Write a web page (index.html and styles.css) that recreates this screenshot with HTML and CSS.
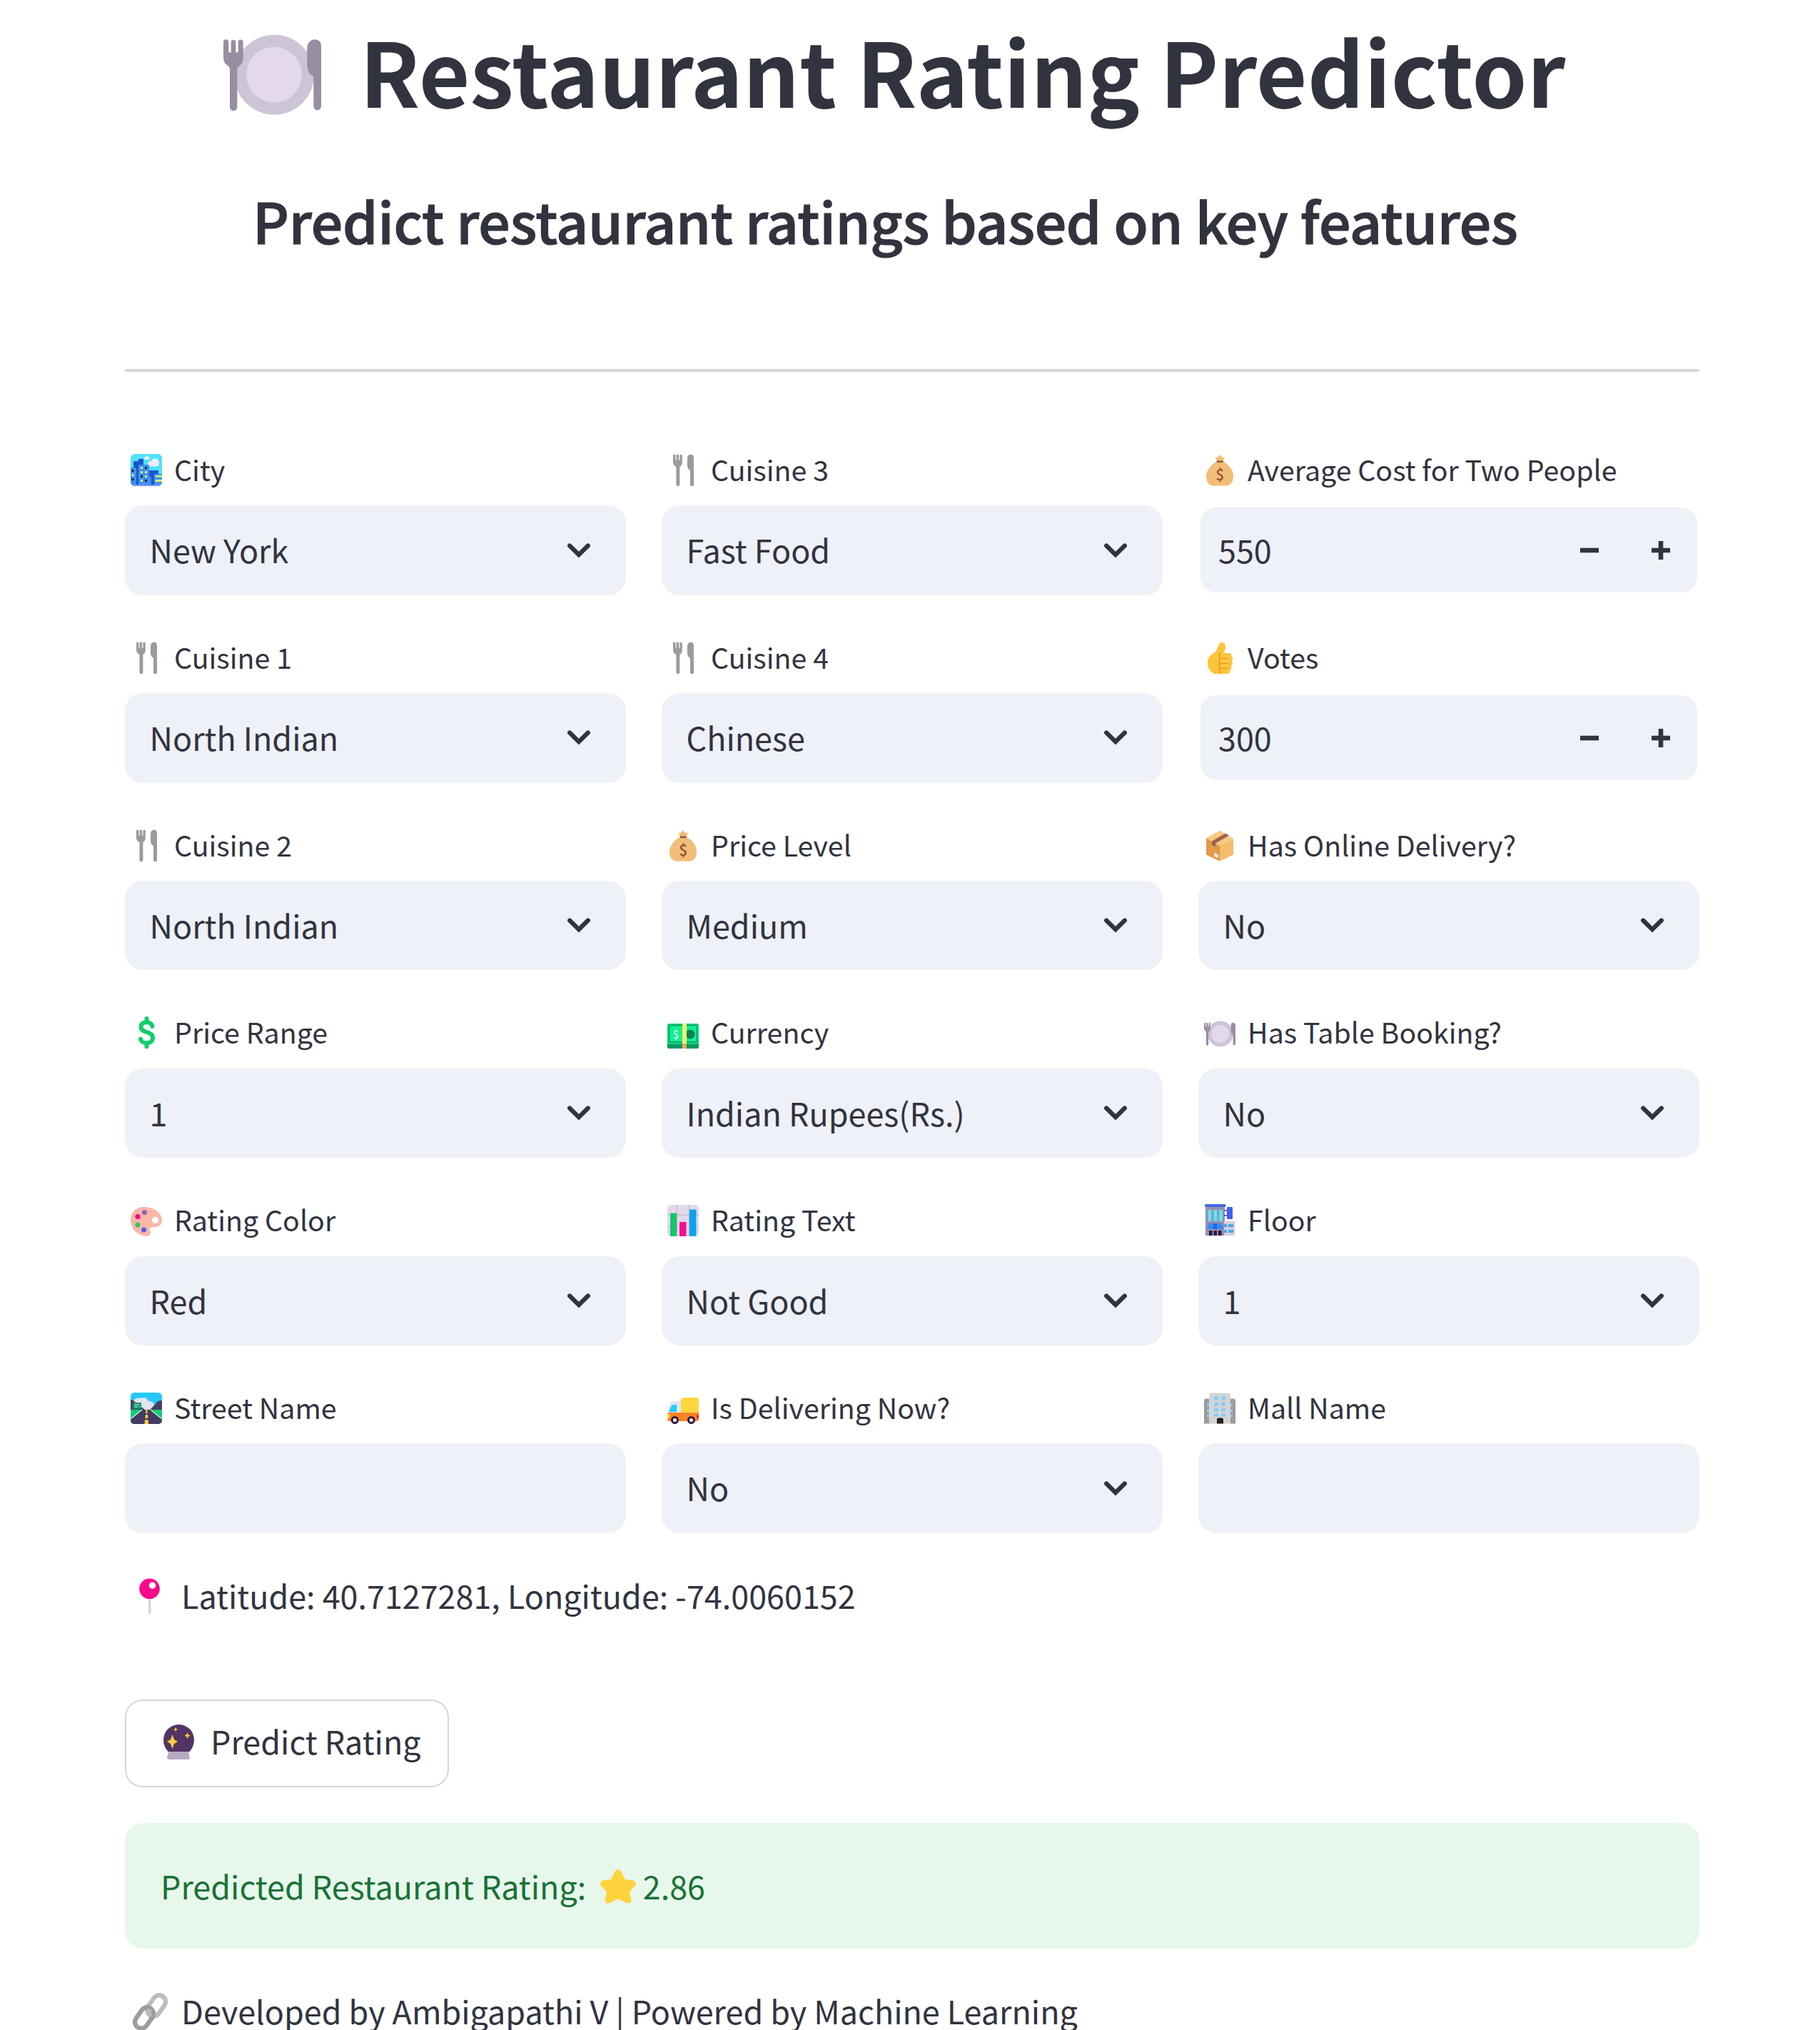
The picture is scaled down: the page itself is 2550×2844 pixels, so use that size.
FILE: index.html
```
<!DOCTYPE html>
<html lang="en">
<head>
<meta charset="utf-8">
<title>Restaurant Rating Predictor</title>
<link rel="stylesheet" href="styles.css">
</head>
<body>
<svg class="sprite" aria-hidden="true">
  <symbol id="plate" viewBox="69 31 411 411">
    <circle cx="283" cy="255" r="168" fill="#cdc4d6"/><circle cx="282" cy="255" r="117" fill="#e3d8ed"/>
    <path d="M69 118a11 11 0 0 1 22 0v39q0 5 5 5t5-5v-39a10 10 0 0 1 20 0v39q0 5 5 5t5-5v-39a10 10 0 0 1 21 0v70q0 20-17 31-8 6-8 14v158a15 15 0 0 1-31 0V235q0-10-7-17-20-10-20-36zM421 141a34 34 0 0 1 35-34q24 3 24 28v253a16 16 0 0 1-32 0V262q-27-12-27-45z" fill="#998da2"/>
  </symbol>
  <symbol id="fork" viewBox="0 0 44 44">
    <path d="M8 1.500a1.800 1.800 0 0 1 3.500 0v7h1.200v-7a1.800 1.800 0 0 1 3.500 0v7h1.200v-7a1.800 1.800 0 0 1 3.400 0v10q0 4-3.400 6v24.500a2.500 2.500 0 0 1-5 0V17.500Q8 15.500 8 11zM28 6q0-5.500 5-6 4 .5 4 4.500v38a2.500 2.500 0 0 1-5 0V22.500q-4-2-4-7z" fill="#9b9b9b"/>
  </symbol>
  <symbol id="city" viewBox="0 0 44 45">
    <clipPath id="cityClip"><rect width="44" height="45" rx="6"/></clipPath>
    <g clip-path="url(#cityClip)">
      <rect width="44" height="45" fill="#50e2ff"/>
      <path d="M18.500 6q0-2 2.500-2 3-2 5 0 1 3-1 4h-5zM24 14q1-4 5-4 2-5 8-3 5 4 2 9-3 3-8 1-6 1-7-3z" fill="#f1ecfa"/>
      <path d="M4 11q0-1 1-1h6V8q0-1 1-1h5q1 0 1 1v37H4zM26 23h13v22H26z" fill="#1756cd"/>
      <path d="M0 19h6q2 0 2 2v24H0zM11 16q0-1 1-1h14v17h3v13H11zM33 28h11v17H33z" fill="#4190ec"/>
      <path d="M14 18h3v3h-3zM20 24h3v3h-3zM14 24h3v3h-3zM20 30h3v3h-3zM14 36h3v3h-3zM1.500 28h3v3h-3zM34.500 30H44v2.500h-9.500zM34.500 36H44v3h-9.500z" fill="#d7ec7c"/>
      <path d="M20 18h3v3h-3zM14 30h3v3h-3zM20 36h3v3h-3zM1.500 22h3v3h-3zM1.500 34h3v3h-3z" fill="#122360"/>
      <path d="M0 43h44v2H0z" fill="#7794ee"/>
    </g>
  </symbol>
  <symbol id="bag" viewBox="0 0 44 44">
    <path d="M18 10l-2.500-6 3 .5L22 .5l3.500 4 3.500-.7L26.500 10C34 14 41 21 41 30.500S37 43 32 44H12C6 43 3 38 3 30.500S10 14 18 10z" fill="#f2bd78"/>
    <path d="M18.500 9h7.500q1 0 1 1.200t-1 1.300h-7.500q-1 0-1-1.300T18.500 9z" fill="#8d5845"/>
  </symbol>
  <symbol id="thumb" viewBox="0 0 44 44">
    <path d="M20 5q1-4 5-4.500 6 1 5 9l-3 6h8q4 0 3.500 4 3 3 .5 7 2 4-1 7 1 3-1 5 0 5-4 6.500H17Q5 43 5 28q0-7 6-11 6-2 9-12z" fill="#fcc53c"/>
    <path d="M23 15q-3 5-1 8-2 4 0 7-2 4 0 7-1 4 2 7M22 23h12M22 30h12M22 37h11" fill="none" stroke="#dc8c22" stroke-width="1.200"/>
  </symbol>
  <symbol id="package" viewBox="0 0 44 44">
    <path d="M3 11.500L22 22v22L3 35z" fill="#e19a48"/><path d="M22 22l19-9.500V35L22 44z" fill="#f4bc6d"/>
    <path d="M3 11.500L22.500 1 41 12.500 22 22z" fill="#fbc982"/>
    <path d="M11 16L30 5l5 3-19 11v5l-5-3z" fill="#9d6252"/><path d="M14 32l6 3v5l-6-3z" fill="#e8e1e8"/>
  </symbol>
  <symbol id="dollar" viewBox="0 0 44 45">
    <path d="M30.500 14C29.500 6.500 14.500 6 14.500 14.500c0 9.500 16.500 5.500 16.500 15.500C31 39.500 15.500 39.500 14 31.500M22.500 3V7.500M22.500 38v4.500" fill="none" stroke="#12ce6b" stroke-width="6" stroke-linecap="round"/>
  </symbol>
  <symbol id="palette" viewBox="0 0 44 45">
    <path d="M19 4C34 4 44 13 44 23c0 8-8 10-14 9-4 1-4 3-2.500 6C29 42 27 45 22 45 10 44 0 35 0 22 0 11 8 4 19 4z" fill="#fbb6a8"/>
    <circle cx="34.500" cy="22.500" r="4.700" fill="#fff"/><circle cx="19.500" cy="11.500" r="3.600" fill="#9465b5"/><circle cx="10" cy="17.500" r="3.600" fill="#ed0c82"/><circle cx="10" cy="29" r="3.500" fill="#29c75f"/><circle cx="18.500" cy="36" r="3.500" fill="#4961e8"/>
  </symbol>
  <symbol id="road" viewBox="0 0 44 45">
    <clipPath id="roadClip"><rect y="1" width="44" height="44" rx="5.500"/></clipPath>
    <g clip-path="url(#roadClip)">
      <rect width="44" height="45" fill="#26c9fc"/>
      <path d="M4 12q4-5 9-3 9-3 12 4 7 0 8 5l-4 9H12z" fill="#e1e3ee"/>
      <path d="M0 11q4 0 6 3l14 11H0zM44 12q-7 0-10 6l-7 7h17z" fill="#453f67"/>
      <path d="M0 25h44v20H0z" fill="#14ca72"/>
      <path d="M0 39l17-14h10l17 14v6H0z" fill="#443b63"/><path d="M1 37l15-12M43 37L28 25" stroke="#d8eade" stroke-width="1.200"/>
      <path d="M21.500 25h1.800l.4 5h-2.800zM20.800 32h3.200l.4 5h-4zM20 39h4.500l.5 6h-5.500z" fill="#ffd03f"/>
      <path d="M3 15h12v9h-2v2h-2v-2H7v2H5v-2H3z" fill="#0b8a66"/><path d="M5 18h8M5 21h5m2 0h2" stroke="#d8fff0" stroke-width="1"/>
    </g>
  </symbol>
  <symbol id="cash" viewBox="0 0 44 45">
    <rect y="28" width="44" height="17" rx="2" fill="#09975f"/><rect y="10" width="44" height="29" rx="2.500" fill="#14d982"/>
    <rect x="2.500" y="12.500" width="39" height="23.500" rx="1" fill="#10ef8d" stroke="#079963" stroke-width="1.400"/>
    <circle cx="32" cy="25" r="6.500" fill="#087f5c"/><rect x="21" y="10" width="6" height="29" fill="#fcf06e"/><rect x="21" y="38" width="6" height="7" fill="#e9aa5b"/>
  </symbol>
  <symbol id="chart" viewBox="0 0 44 45">
    <rect y="1" width="44" height="44" rx="5" fill="#e2d9ec"/><path d="M13.500 1v44M30.500 1v44M0 15h44M0 31h44" stroke="#b9aec5" stroke-width=".9"/>
    <rect x="4" y="12.500" width="9" height="32.500" rx="1" fill="#13c966"/><rect x="17" y="25" width="9.500" height="20" rx="1" fill="#f50d91"/><rect x="31" y="7.500" width="9.500" height="37.500" rx="1" fill="#08a5ec"/>
  </symbol>
  <symbol id="store" viewBox="0 0 44 45">
    <path d="M2 3h27v41H2z" fill="#9690ae"/><path d="M28 24h15v20H28z" fill="#d3cde3"/><rect x="1" y="0" width="29.500" height="4" rx="1.500" fill="#4169de"/>
    <path d="M28 8h5v1.500h-5zM28 15h5v1.500h-5z" fill="#493d70"/><rect x="32" y="4" width="8" height="17" rx="1" fill="#3f5dfb"/>
    <path d="M5.500 8h5v16h-5zM13.500 8h5v16h-5zM21 8h5v16h-5z" fill="#60e3f5"/>
    <path d="M7 27h17l4 8H4z" fill="#338bf5"/><path d="M13 27h5v8h-5z" fill="#2c62e0"/>
    <path d="M7 37h4.500v7H7zM13.500 37H18v7h-4.500zM20 37h4.500v7H20z" fill="#2b183a"/>
    <path d="M28 28h4v4h-4zM34 28h7v4h-7zM28 36h4v4h-4zM34 36h7v4h-7z" fill="#46a5ea"/>
  </symbol>
  <symbol id="truck" viewBox="0 0 44 45">
    <path d="M2 22l3-7q1-2 3-2l14-1v19H2z" fill="#dfe4f4"/><path d="M19 13q0-5 5-5h16q4 0 4 4v19H19z" fill="#fdd63c"/>
    <path d="M2 28l3.500-8q.8-2 3-2H13v10H2z" fill="#29c9fd"/><path d="M1 29h43v9q0 3-3 3H3q-3 0-3-3v-6z" fill="#fb8124"/>
    <path d="M0 34q0-3 3-3 2 4-3 7z" fill="#ffe25a"/><path d="M44 32q-3 0-3 3t3 2z" fill="#d91b41"/>
    <circle cx="10.500" cy="39.500" r="4" fill="#fff" stroke="#321b40" stroke-width="3"/><circle cx="33.500" cy="39.500" r="4" fill="#fff" stroke="#321b40" stroke-width="3"/>
  </symbol>
  <symbol id="office" viewBox="0 0 44 44">
    <path d="M0 12q0-3 3-3h5v35H0zM36 9h5q3 0 3 3v32h-8z" fill="#9b9b9b"/><path d="M7 4q0-3 3-3h24q3 0 3 3v40H7z" fill="#d4d4d4"/>
    <path d="M14 6h6v5h-6zM24 6h6v5h-6zM14 14h6v5h-6zM24 14h6v5h-6zM14 22h6v5h-6zM24 22h6v5h-6zM14 30h6v4h-6zM24 30h6v4h-6zM4 16h3v4H4zM4 24h3v4H4zM4 31h3v4H4zM37 16h3v4h-3zM37 24h3v4h-3zM37 31h3v4h-3z" fill="#83cdfb"/>
    <path d="M18 38q0-2 2-2h5q2 0 2 2v6h-9z" fill="#202020"/>
  </symbol>
  <symbol id="chevron" viewBox="0 0 32 21"><path d="M3.200 3.500L16 16.200 28.800 3.500" fill="none" stroke="#31333f" stroke-width="6.200" stroke-linecap="round"/></symbol>
  <symbol id="minus" viewBox="0 0 26 26"><path d="M0 9.700h26v6.600H0z" fill="#31333f"/></symbol>
  <symbol id="plus" viewBox="0 0 26 26"><path d="M0 9.700h9.700V0h6.600v9.700H26v6.600h-9.700V26H9.700v-9.700H0z" fill="#31333f"/></symbol>
</svg>
<main class="page">
  <h1 class="title"><svg class="title-icon"><use href="#plate"/></svg><span>Restaurant Rating Predictor</span></h1>
  <h3 class="subtitle"><span>Predict restaurant ratings based on key features</span></h3>
  <hr class="rule">
  <form class="fields">
    <div class="field"><label class="label"><svg class="icon"><use href="#city"/></svg><span>City</span></label><div class="control"><span>New York</span><svg class="chevron"><use href="#chevron"/></svg></div></div>
    <div class="field"><label class="label"><svg class="icon"><use href="#fork"/></svg><span>Cuisine 3</span></label><div class="control"><span>Fast Food</span><svg class="chevron"><use href="#chevron"/></svg></div></div>
    <div class="field"><label class="label"><svg class="icon"><use href="#bag"/><text x="22.300" y="36.500" class="bag-sign">$</text></svg><span>Average Cost for Two People</span></label><div class="control number"><span>550</span><svg class="step"><use href="#minus"/></svg><svg class="step"><use href="#plus"/></svg></div></div>

    <div class="field"><label class="label"><svg class="icon"><use href="#fork"/></svg><span>Cuisine 1</span></label><div class="control"><span>North Indian</span><svg class="chevron"><use href="#chevron"/></svg></div></div>
    <div class="field"><label class="label"><svg class="icon"><use href="#fork"/></svg><span>Cuisine 4</span></label><div class="control"><span>Chinese</span><svg class="chevron"><use href="#chevron"/></svg></div></div>
    <div class="field"><label class="label"><svg class="icon"><use href="#thumb"/></svg><span>Votes</span></label><div class="control number"><span>300</span><svg class="step"><use href="#minus"/></svg><svg class="step"><use href="#plus"/></svg></div></div>

    <div class="field"><label class="label"><svg class="icon"><use href="#fork"/></svg><span>Cuisine 2</span></label><div class="control"><span>North Indian</span><svg class="chevron"><use href="#chevron"/></svg></div></div>
    <div class="field"><label class="label"><svg class="icon"><use href="#bag"/><text x="22.300" y="36.500" class="bag-sign">$</text></svg><span>Price Level</span></label><div class="control"><span>Medium</span><svg class="chevron"><use href="#chevron"/></svg></div></div>
    <div class="field"><label class="label"><svg class="icon"><use href="#package"/></svg><span>Has Online Delivery?</span></label><div class="control"><span>No</span><svg class="chevron"><use href="#chevron"/></svg></div></div>

    <div class="field"><label class="label"><svg class="icon"><use href="#dollar"/></svg><span>Price Range</span></label><div class="control"><span>1</span><svg class="chevron"><use href="#chevron"/></svg></div></div>
    <div class="field"><label class="label"><svg class="icon"><use href="#cash"/><text x="12" y="31" class="cash-sign">$</text></svg><span>Currency</span></label><div class="control"><span>Indian Rupees(Rs.)</span><svg class="chevron"><use href="#chevron"/></svg></div></div>
    <div class="field"><label class="label"><svg class="icon"><use href="#plate"/></svg><span>Has Table Booking?</span></label><div class="control"><span>No</span><svg class="chevron"><use href="#chevron"/></svg></div></div>

    <div class="field"><label class="label"><svg class="icon"><use href="#palette"/></svg><span>Rating Color</span></label><div class="control"><span>Red</span><svg class="chevron"><use href="#chevron"/></svg></div></div>
    <div class="field"><label class="label"><svg class="icon"><use href="#chart"/></svg><span>Rating Text</span></label><div class="control"><span>Not Good</span><svg class="chevron"><use href="#chevron"/></svg></div></div>
    <div class="field"><label class="label"><svg class="icon"><use href="#store"/></svg><span>Floor</span></label><div class="control"><span>1</span><svg class="chevron"><use href="#chevron"/></svg></div></div>

    <div class="field"><label class="label"><svg class="icon"><use href="#road"/></svg><span>Street Name</span></label><div class="control"></div></div>
    <div class="field"><label class="label"><svg class="icon"><use href="#truck"/></svg><span>Is Delivering Now?</span></label><div class="control"><span>No</span><svg class="chevron"><use href="#chevron"/></svg></div></div>
    <div class="field"><label class="label"><svg class="icon"><use href="#office"/></svg><span>Mall Name</span></label><div class="control"></div></div>
  </form>
  <p class="note location">
    <svg class="note-icon" viewBox="0 0 51 50"><path d="M24 25h3.500v24H24z" fill="#d6d6d6"/><circle cx="25.500" cy="13.800" r="14.300" fill="#f9078c"/><circle cx="29.500" cy="9.300" r="4.700" fill="#fff"/></svg>
    <span>Latitude: 40.7127281, Longitude: -74.0060152</span>
  </p>
  <button class="predict" type="button">
    <svg class="ball" viewBox="0 0 43 49"><path d="M8 36h27l2 11q0 2-2 2H8q-3 0-3-3z" fill="#b6aac1"/><path d="M6.500 38Q0 31 0 21.500a21.500 21.500 0 0 1 43 0Q43 31 36.500 38z" fill="#523464"/><path d="M12.500 14l2.500 7 5 3-5 3-2.500 7-2.500-7-5-3 5-3zM33.500 11l1.200 3 2.800 1.500-2.800 1.500-1.200 3-1.200-3-2.800-1.500 2.800-1.500zM17 4l1 2 2 1-2 1-1 2-1-2-2-1 2-1z" fill="#ffd03b"/></svg>
    <span>Predict Rating</span>
  </button>
  <div class="result">
    <span class="result-label">Predicted Restaurant Rating:</span>
    <svg class="star" viewBox="0 0 50 48"><path d="M20.500 3q4.500-6 9 0l5.500 11 11 1.500q6.500 2 3 7.500l-8 8.500 2.500 11.500q-1 6-7 4l-11.500-6-11.500 6q-6 2-7-4L9 31.500 1 23q-3.500-5.500 3-7.500L15 14z" fill="#fed43e"/></svg>
    <span class="result-value">2.86</span>
  </div>
  <p class="note credits">
    <svg class="note-icon" viewBox="0 0 51 50" fill="none" stroke-width="6.300"><rect x="26" y="0" width="18" height="32" rx="9" transform="rotate(35 35 16)" stroke="#bdbdbd"/><rect x="9" y="17" width="18" height="32" rx="9" transform="rotate(35 18 33)" stroke="#9c9c9c"/><path d="M26 21q-3 6 1 10" stroke="#bdbdbd"/></svg>
    <span>Developed by Ambigapathi V | Powered by Machine Learning</span>
  </p>
</main>
</body>
</html>
```
FILE: styles.css
```
* { box-sizing: border-box; }
body {
  margin: 0;
  height: 2844px;
  overflow: hidden;
  background: #fff;
  color: #31333f;
  font-family: "Noto Sans CJK SC", "Noto Sans", sans-serif;
  font-size: 44.900px;
}
.sprite { position: absolute; width: 0; height: 0; }
.page { display: flex; flex-direction: column; width: 2206px; margin-left: 175px; padding-top: 15px; }
.title { display: flex; align-items: flex-start; margin: 0; padding-left: 137px; font-size: 123.600px; line-height: 165px; font-weight: 700; white-space: nowrap; }
.title-icon { width: 137px; height: 137px; margin: 15px 54px 0 1px; }
.subtitle { margin: 81px 0 0; padding-left: 179px; font-size: 78.700px; line-height: 95px; font-weight: 500; letter-spacing: -0.320px; -webkit-text-stroke: 1.200px #31333f; white-space: nowrap; }
.rule { width: 100%; height: 4px; margin: 161px 0 100px; border: 0; background: #d6d7da; }
.fields { display: grid; grid-template-columns: repeat(3, 1fr); gap: 50px; margin: 0; }
.field { display: flex; flex-direction: column; height: 212.800px; }
.label { display: flex; align-items: flex-start; height: 87.400px; padding-left: 8px; font-size: 39.350px; line-height: 71.500px; white-space: nowrap; }
.icon { width: 44px; height: 45px; margin: 15px 17px 0 0; }
.control { display: flex; align-items: center; height: 125.400px; padding: 0 50px 0 34.500px; border-radius: 25px; background: #eef1f7; line-height: 66px; }
.control span { padding-bottom: 1.500px; }
.chevron { width: 32px; height: 21px; margin-left: auto; }
.number { height: 119px; margin: 3px; padding: 0 38px 0 25px; border-radius: 22px; }
.number span { margin-right: auto; }
.step { width: 26px; height: 26px; margin-left: 74px; }
.note { display: flex; align-items: flex-start; margin: 0; line-height: 75px; white-space: nowrap; }
.note-icon { width: 51px; height: 50px; margin: 15px 19px 0 9px; overflow: visible; }
.location { margin-top: 49.500px; }
.predict { display: flex; align-items: flex-start; width: 454px; height: 123px; margin-top: 109px; padding: 33px 0 0 51.500px; border: 2.500px solid #d6d6d9; border-radius: 25px; background: #fff; color: inherit; font: inherit; line-height: 46px; white-space: nowrap; }
.ball { width: 43px; height: 49px; margin-right: 23.500px; }
.result { display: flex; align-items: center; height: 176px; margin-top: 50px; padding-left: 50px; border-radius: 25px; background: #e8f7ec; color: #177233; white-space: nowrap; }
.result span { padding-bottom: 2px; }
.star { width: 50px; height: 48px; margin: 2px 10px 0 19.500px; }
.credits { margin-top: 49px; }
.bag-sign, .cash-sign { font-size: 21px; font-weight: 500; text-anchor: middle; fill: #8d4f36; }
.cash-sign { font-size: 15px; fill: #d5fff0; }
```
